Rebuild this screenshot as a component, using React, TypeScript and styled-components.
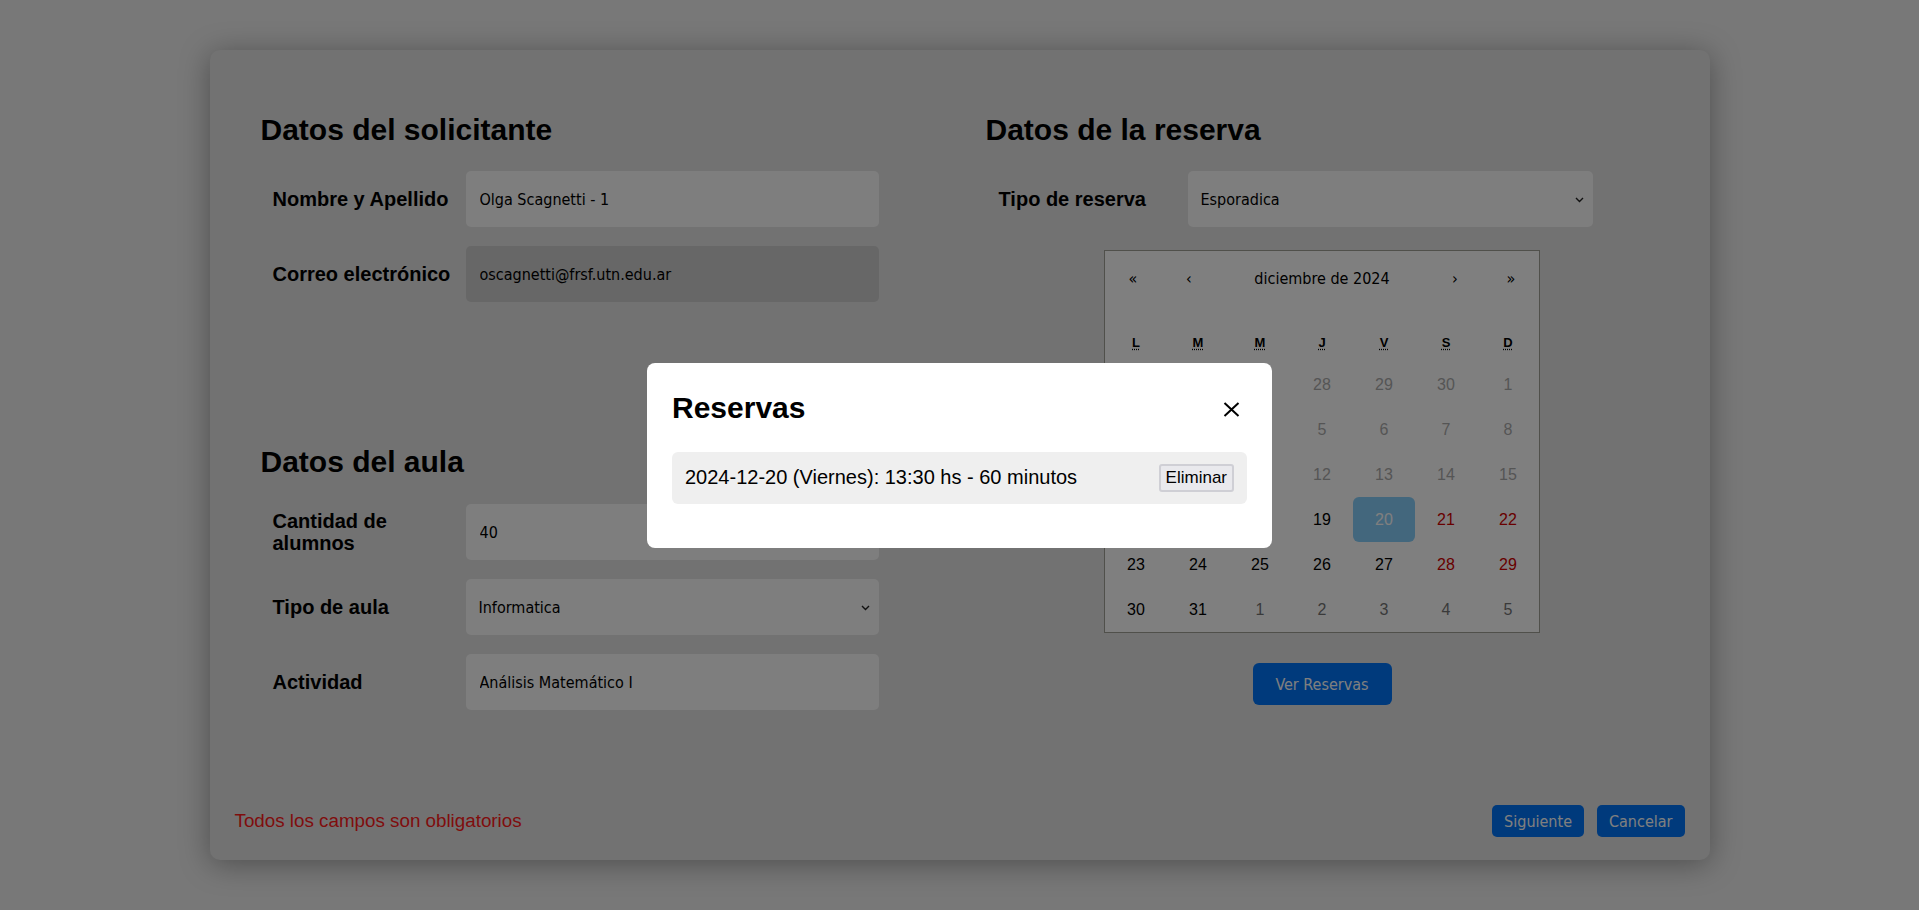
import React from "react";
import styled, { createGlobalStyle } from "styled-components";

const GlobalStyle = createGlobalStyle`
  html, body {
    margin: 0;
    padding: 0;
    background: #f0f0f0;
  }
  body {
    font-family: "Liberation Sans", Arial, sans-serif;
    color: #000;
  }
  * { box-sizing: border-box; }
`;

const controlFont = `"DejaVu Sans Condensed", "DejaVu Sans", sans-serif`;

const Page = styled.div`
  min-height: 910px;
  padding-top: 50px;
`;

const Card = styled.div`
  width: 1500px;
  height: 810px;
  margin: 0 auto;
  background: #e4e4e4;
  border-radius: 10px;
  box-shadow: 0 4px 30px rgba(0, 0, 0, 0.35);
  display: flex;
  flex-direction: column;
`;

const Columns = styled.div`
  display: grid;
  grid-template-columns: 679px 679px;
  column-gap: 46px;
  padding: 62px 48px 0;
`;

const Column = styled.div`
  display: flex;
  flex-direction: column;
`;

const Section = styled.section<{ $offset?: number }>`
  display: flex;
  flex-direction: column;
  margin-top: ${(p) => p.$offset ?? 0}px;
`;

const Heading = styled.h2<{ $gap: number }>`
  margin: 0 0 ${(p) => p.$gap}px;
  padding-left: 3px;
  font-size: 30px;
  line-height: 36px;
  font-weight: 700;
`;

const Rows = styled.div`
  display: flex;
  flex-direction: column;
  gap: 19px;
`;

const FormRow = styled.div<{ $labelW: number; $inputW: number }>`
  display: grid;
  grid-template-columns: ${(p) => p.$labelW}px ${(p) => p.$inputW}px;
  align-items: center;
  height: 56px;
`;

const Label = styled.label<{ $pad: number }>`
  padding-left: ${(p) => p.$pad}px;
  padding-right: 4px;
  font-size: 20px;
  line-height: 22px;
  font-weight: 700;
`;

const TextInput = styled.input<{ $muted?: boolean }>`
  height: 56px;
  width: 100%;
  border: none;
  outline: none;
  border-radius: 5px;
  padding: 0 14px;
  background: ${(p) => (p.$muted ? "#cecece" : "#fcfcfc")};
  color: #000;
  font-family: ${controlFont};
  font-size: 16px;
`;

const SelectWrap = styled.div`
  position: relative;
  height: 56px;
`;

const Select = styled.select`
  appearance: none;
  -webkit-appearance: none;
  height: 56px;
  width: 100%;
  border: none;
  outline: none;
  border-radius: 5px;
  padding: 0 30px 0 13px;
  background: #fcfcfc;
  color: #000;
  font-family: ${controlFont};
  font-size: 16px;
`;

const Chevron = styled.svg`
  position: absolute;
  right: 9px;
  top: 50%;
  margin-top: -2px;
  pointer-events: none;
`;

const CalendarBlock = styled.div`
  display: flex;
  flex-direction: column;
  align-items: center;
  margin-top: 23px;
`;

const Calendar = styled.div`
  width: 436px;
  height: 383px;
  border: 1px solid #a0a096;
  background: #fff;
  font-family: "Liberation Sans", Arial, sans-serif;
`;

const CalNav = styled.div`
  display: flex;
  height: 55px;
  margin-bottom: 17px;
`;

const NavButton = styled.button`
  width: 56px;
  height: 55px;
  border: none;
  background: none;
  padding: 0;
  font-family: ${controlFont};
  font-size: 16px;
  color: #000;
`;

const NavLabel = styled.button`
  flex: 1;
  height: 55px;
  border: none;
  background: none;
  padding: 0;
  font-family: ${controlFont};
  font-size: 16px;
  color: #000;
`;

const Weekdays = styled.div`
  display: grid;
  grid-template-columns: repeat(7, 62px);
  height: 39px;
  align-items: center;
  text-align: center;
  font-size: 13px;
  font-weight: 700;
  text-transform: uppercase;
`;

const WeekAbbr = styled.abbr`
  text-decoration: underline dotted;
  text-underline-offset: 2px;
  cursor: help;
`;

const Days = styled.div`
  display: grid;
  grid-template-columns: repeat(7, 62px);
  grid-auto-rows: 45px;
`;

type DayKind = "normal" | "weekend" | "neighbor" | "disabled" | "selected";

const dayColors: Record<DayKind, string> = {
  normal: "#000",
  weekend: "#d10000",
  neighbor: "#757575",
  disabled: "#ababab",
  selected: "#fff",
};

const Tile = styled.button<{ $kind: DayKind }>`
  border: none;
  padding: 0;
  border-radius: 6px;
  background: ${(p) => (p.$kind === "selected" ? "#87cefa" : "transparent")};
  color: ${(p) => dayColors[p.$kind]};
  font-family: "Liberation Sans", Arial, sans-serif;
  font-size: 16px;
`;

const PrimaryButton = styled.button<{ $w?: number; $h: number; $radius: number }>`
  height: ${(p) => p.$h}px;
  ${(p) => (p.$w ? `width: ${p.$w}px;` : "padding: 0 12px;")}
  border: none;
  border-radius: ${(p) => p.$radius}px;
  background: #0074f8;
  color: #fff;
  font-family: ${controlFont};
  font-size: 16px;
`;

const VerButton = styled(PrimaryButton)`
  margin-top: 30px;
`;

const Footer = styled.div`
  margin-top: auto;
  display: flex;
  justify-content: space-between;
  align-items: center;
  padding: 0 25px 23px;
`;

const RequiredNote = styled.span`
  color: #ff1a1a;
  font-size: 18.8px;
`;

const FooterActions = styled.div`
  display: flex;
  gap: 13px;
`;

const Overlay = styled.div`
  position: fixed;
  inset: 0;
  background: rgba(0, 0, 0, 0.5);
  display: flex;
  align-items: center;
  justify-content: center;
`;

const Modal = styled.div`
  width: 625px;
  background: #fff;
  border-radius: 8px;
  padding: 27px 25px 44px;
`;

const ModalHeader = styled.div`
  display: flex;
  justify-content: space-between;
  align-items: center;
  height: 36px;
  margin-bottom: 26px;
`;

const ModalTitle = styled.h2`
  margin: 0;
  font-size: 30px;
  line-height: 36px;
  font-weight: 700;
`;

const CloseButton = styled.button`
  width: 32px;
  height: 32px;
  margin-top: 4px;
  border: none;
  background: none;
  padding: 0;
  display: flex;
  align-items: center;
  justify-content: center;
`;

const ReservaRow = styled.div`
  display: flex;
  justify-content: space-between;
  align-items: center;
  height: 52px;
  padding: 0 13px;
  background: #efefef;
  border-radius: 6px;
  font-size: 20px;
`;

const DeleteButton = styled.button`
  height: 28px;
  padding: 0 5px;
  border: 2px solid #cfcfd5;
  border-radius: 3px;
  background: #e9e9ed;
  color: #000;
  font-family: "Liberation Sans", Arial, sans-serif;
  font-size: 17px;
`;

type Day = { label: number; kind: DayKind };

function buildDays(): Day[] {
  const days: Day[] = [];
  for (let d = 25; d <= 30; d++) days.push({ label: d, kind: "disabled" });
  for (let d = 1; d <= 31; d++) {
    const idx = days.length;
    const weekend = idx % 7 >= 5;
    let kind: DayKind = "normal";
    if (d < 19) kind = "disabled";
    else if (d === 20) kind = "selected";
    else if (weekend) kind = "weekend";
    days.push({ label: d, kind });
  }
  for (let d = 1; d <= 5; d++) days.push({ label: d, kind: "neighbor" });
  return days;
}

const weekdays = [
  ["L", "lunes"],
  ["M", "martes"],
  ["M", "miércoles"],
  ["J", "jueves"],
  ["V", "viernes"],
  ["S", "sábado"],
  ["D", "domingo"],
];

const SelectChevron = () => (
  <Chevron width="9" height="6" viewBox="0 0 9 6">
    <path d="M1 1 L4.5 4.5 L8 1" fill="none" stroke="#222" strokeWidth="1.4" />
  </Chevron>
);

export default function App() {
  const days = buildDays();
  return (
    <>
      <GlobalStyle />
      <Page>
        <Card>
          <Columns>
            <Column>
              <Section>
                <Heading $gap={23}>Datos del solicitante</Heading>
                <Rows>
                  <FormRow $labelW={208} $inputW={413}>
                    <Label $pad={15}>Nombre y Apellido</Label>
                    <TextInput readOnly value="Olga Scagnetti - 1" />
                  </FormRow>
                  <FormRow $labelW={208} $inputW={413}>
                    <Label $pad={15}>Correo electrónico</Label>
                    <TextInput readOnly $muted value="oscagnetti@frsf.utn.edu.ar" />
                  </FormRow>
                </Rows>
              </Section>
              <Section $offset={142}>
                <Heading $gap={24}>Datos del aula</Heading>
                <Rows>
                  <FormRow $labelW={208} $inputW={413}>
                    <Label $pad={15}>Cantidad de alumnos</Label>
                    <TextInput readOnly value="40" />
                  </FormRow>
                  <FormRow $labelW={208} $inputW={413}>
                    <Label $pad={15}>Tipo de aula</Label>
                    <SelectWrap>
                      <Select defaultValue="Informatica">
                        <option>Informatica</option>
                      </Select>
                      <SelectChevron />
                    </SelectWrap>
                  </FormRow>
                  <FormRow $labelW={208} $inputW={413}>
                    <Label $pad={15}>Actividad</Label>
                    <TextInput readOnly value="Análisis Matemático I" />
                  </FormRow>
                </Rows>
              </Section>
            </Column>
            <Column>
              <Section>
                <Heading $gap={23}>Datos de la reserva</Heading>
                <FormRow $labelW={205} $inputW={405}>
                  <Label $pad={16}>Tipo de reserva</Label>
                  <SelectWrap>
                    <Select defaultValue="Esporadica">
                      <option>Esporadica</option>
                    </Select>
                    <SelectChevron />
                  </SelectWrap>
                </FormRow>
              </Section>
              <CalendarBlock>
                <Calendar>
                  <CalNav>
                    <NavButton>«</NavButton>
                    <NavButton>‹</NavButton>
                    <NavLabel>diciembre de 2024</NavLabel>
                    <NavButton>›</NavButton>
                    <NavButton>»</NavButton>
                  </CalNav>
                  <Weekdays>
                    {weekdays.map(([l, t], i) => (
                      <div key={i}>
                        <WeekAbbr title={t}>{l}</WeekAbbr>
                      </div>
                    ))}
                  </Weekdays>
                  <Days>
                    {days.map((d, i) => (
                      <Tile key={i} $kind={d.kind}>
                        {d.label}
                      </Tile>
                    ))}
                  </Days>
                </Calendar>
                <VerButton $w={139} $h={42} $radius={6}>Ver Reservas</VerButton>
              </CalendarBlock>
            </Column>
          </Columns>
          <Footer>
            <RequiredNote>Todos los campos son obligatorios</RequiredNote>
            <FooterActions>
              <PrimaryButton $h={32} $radius={5}>Siguiente</PrimaryButton>
              <PrimaryButton $h={32} $radius={5}>Cancelar</PrimaryButton>
            </FooterActions>
          </Footer>
        </Card>
      </Page>
      <Overlay>
        <Modal>
          <ModalHeader>
            <ModalTitle>Reservas</ModalTitle>
            <CloseButton aria-label="Cerrar">
              <svg width="17" height="15" viewBox="0 0 17 15">
                <path d="M1.5 1 L15.5 14 M15.5 1 L1.5 14" stroke="#000" strokeWidth="2" fill="none" />
              </svg>
            </CloseButton>
          </ModalHeader>
          <ReservaRow>
            <span>2024-12-20 (Viernes): 13:30 hs - 60 minutos</span>
            <DeleteButton>Eliminar</DeleteButton>
          </ReservaRow>
        </Modal>
      </Overlay>
    </>
  );
}
